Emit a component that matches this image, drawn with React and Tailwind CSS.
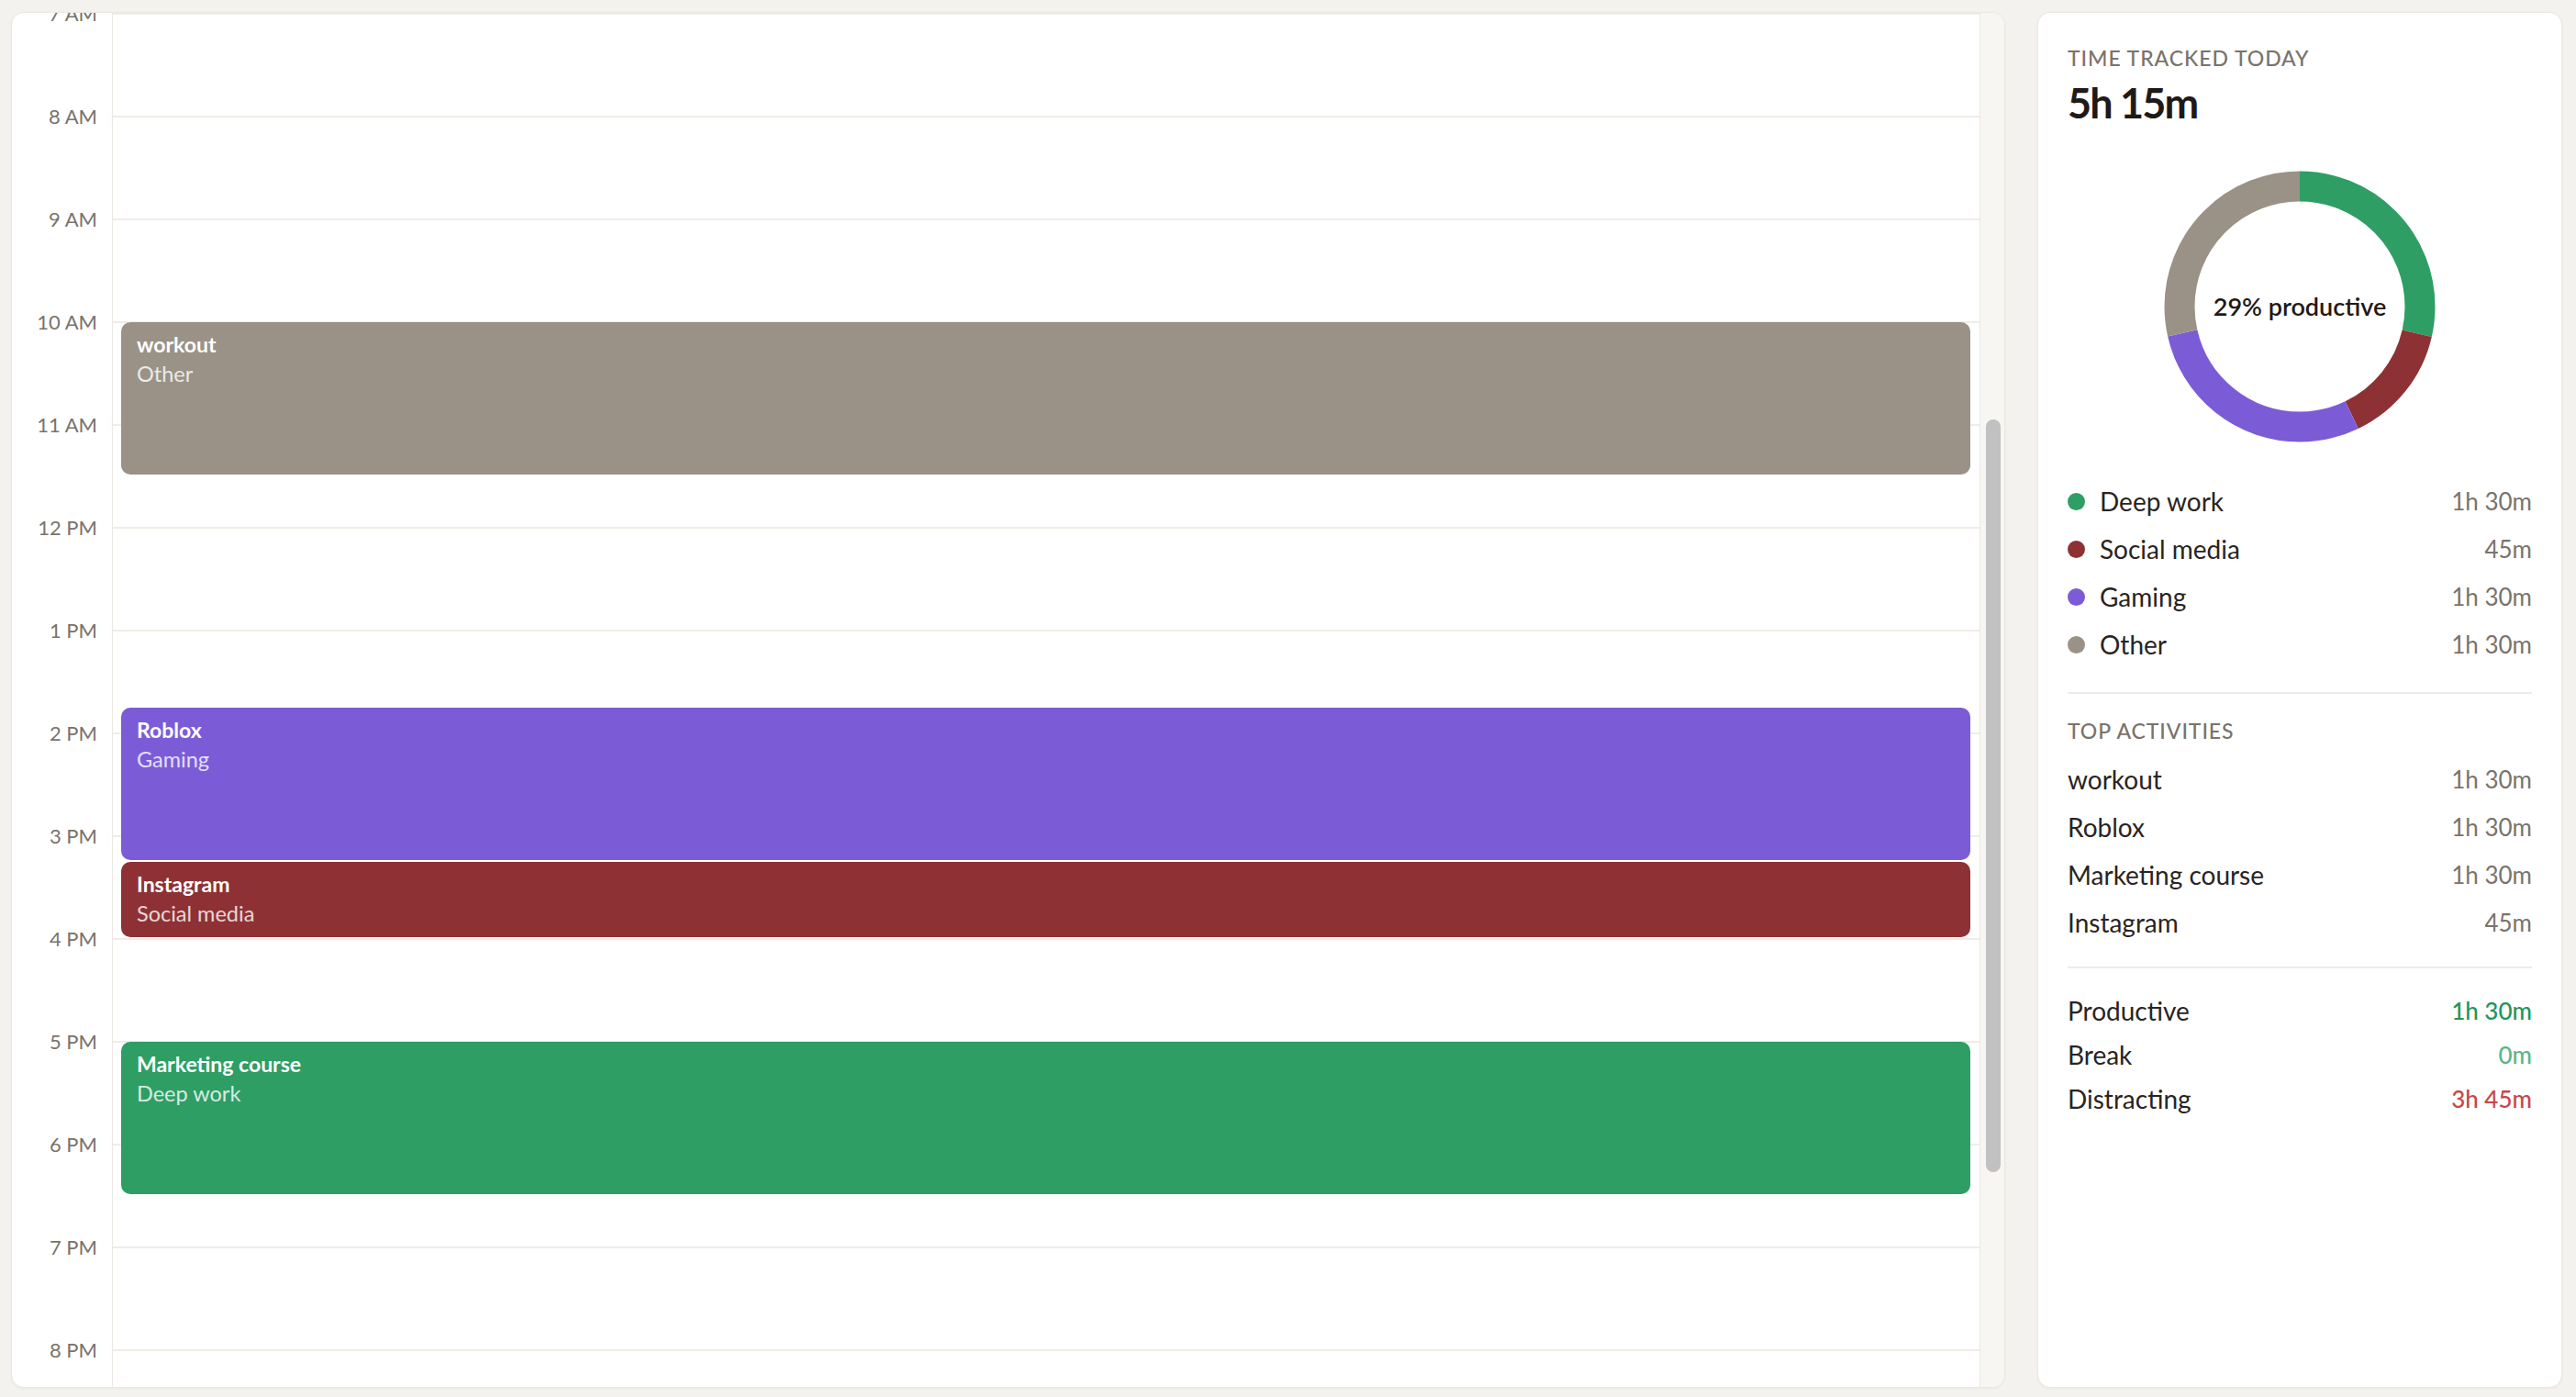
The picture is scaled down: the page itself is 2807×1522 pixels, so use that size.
import { clsx } from 'clsx'

const HOUR = 112
const START = 7

const HOURS = ['7 AM', '8 AM', '9 AM', '10 AM', '11 AM', '12 PM', '1 PM', '2 PM', '3 PM', '4 PM', '5 PM', '6 PM', '7 PM', '8 PM']

const EVENTS = [
  { title: 'workout', category: 'Other', start: 10, end: 11.5, bg: 'bg-[#9a9286]' },
  { title: 'Roblox', category: 'Gaming', start: 13.75, end: 15.25, bg: 'bg-[#7b5cd6]' },
  { title: 'Instagram', category: 'Social media', start: 15.25, end: 16, bg: 'bg-[#8e3135]' },
  { title: 'Marketing course', category: 'Deep work', start: 17, end: 18.5, bg: 'bg-[#2e9e65]' },
]

const CATEGORIES = [
  { name: 'Deep work', value: '1h 30m', minutes: 90, color: '#2e9e65', dot: 'bg-[#2e9e65]' },
  { name: 'Social media', value: '45m', minutes: 45, color: '#8e3135', dot: 'bg-[#8e3135]' },
  { name: 'Gaming', value: '1h 30m', minutes: 90, color: '#7b5cd6', dot: 'bg-[#7b5cd6]' },
  { name: 'Other', value: '1h 30m', minutes: 90, color: '#9a9286', dot: 'bg-[#9a9286]' },
]

const TOP = [
  { name: 'workout', value: '1h 30m' },
  { name: 'Roblox', value: '1h 30m' },
  { name: 'Marketing course', value: '1h 30m' },
  { name: 'Instagram', value: '45m' },
]

const FONT = { fontFamily: 'Lato, "Open Sans", sans-serif' }

export default function App() {
  return (
    <div
      className="h-screen w-full bg-[#f4f2ee] flex gap-[35px] pl-3 pr-[15px] pt-[13px] pb-[10px] text-[#2a2421]"
      style={FONT}
    >
      <Calendar />
      <Summary />
    </div>
  )
}

function Calendar() {
  return (
    <div className="flex-1 min-w-0 flex bg-white rounded-[14px] border border-[#ebe7e1] overflow-hidden shadow-[0_1px_3px_rgba(60,40,20,0.05)]">
      <div className="flex-1 min-w-0 overflow-hidden">
        <div className="flex">
          {/* hour labels */}
          <div className="w-[110px] shrink-0 border-r border-[#ece8e2] flex flex-col -mt-[56px]">
            {HOURS.map((h) => (
              <div key={h} className="h-[112px] shrink-0 flex items-center justify-end pr-[16px] text-[22px] text-[#7a736b]">
                {h}
              </div>
            ))}
            <div className="h-[224px] shrink-0" />
          </div>

          {/* grid */}
          <div className="flex-1 relative">
            {[...HOURS, '9 PM', '10 PM'].map((h) => (
              <div key={h} className="h-[112px] border-t-2 border-[#f0ece7]" />
            ))}
            {EVENTS.map((ev) => (
              <div
                key={ev.title}
                className={clsx('absolute left-[9px] right-[10px] rounded-[10px] px-[17px] pt-[8px] text-white', ev.bg)}
                style={{ top: (ev.start - START) * HOUR + 1, height: (ev.end - ev.start) * HOUR - 2 }}
              >
                <div className="text-[23px] font-bold leading-[32px]">{ev.title}</div>
                <div className="text-[23.5px] leading-[32px] text-white/80">{ev.category}</div>
              </div>
            ))}
          </div>
        </div>
      </div>

      {/* scrollbar */}
      <div className="w-[27px] shrink-0 border-l border-[#ece8e2] bg-[#f7f6f3] flex flex-col pl-[6px]">
        <div className="h-[443px] shrink-0" />
        <div className="h-[820px] w-[16px] rounded-full bg-[#c1c1c1]" />
      </div>
    </div>
  )
}

function Donut() {
  const r = 131
  const c = 2 * Math.PI * r
  const total = CATEGORIES.reduce((s, x) => s + x.minutes, 0)
  let offset = 0

  return (
    <div className="relative w-[296px] h-[296px] mx-auto">
      <svg width="296" height="296" viewBox="0 0 296 296" className="-rotate-90">
        {CATEGORIES.map((cat) => {
          const len = (cat.minutes / total) * c
          const el = (
            <circle
              key={cat.name}
              cx="148"
              cy="148"
              r={r}
              fill="none"
              stroke={cat.color}
              strokeWidth="33"
              strokeDasharray={`${len} ${c - len}`}
              strokeDashoffset={-offset}
            />
          )
          offset += len
          return el
        })}
      </svg>
      <div className="absolute inset-0 flex items-center justify-center text-[27px] font-semibold text-[#1f1a17]">
        29% productive
      </div>
    </div>
  )
}

function Row({ label, value, valueClass = 'text-[#7a736b]', dot, height = 'h-[52px]' }) {
  return (
    <div className={clsx('flex items-center justify-between', height)}>
      <div className="flex items-center gap-4">
        {dot && <span className={clsx('w-[19px] h-[19px] rounded-full', dot)} />}
        <span className="text-[28px]">{label}</span>
      </div>
      <span className={clsx('text-[26px]', valueClass)}>{value}</span>
    </div>
  )
}

function Summary() {
  return (
    <div className="w-[572px] shrink-0 bg-white rounded-[14px] border border-[#ebe7e1] px-8 pt-[34px] shadow-[0_1px_3px_rgba(60,40,20,0.05)]">
      <div className="text-[23px] leading-[30px] font-medium tracking-[0.04em] text-[#7a736b]">TIME TRACKED TODAY</div>
      <div className="text-[45px] leading-[50px] font-bold tracking-[-0.04em] text-[#1f1a17] mt-[9px]">5h 15m</div>

      <div className="mt-[49px]">
        <Donut />
      </div>

      <div className="mt-[38px]">
        {CATEGORIES.map((cat) => (
          <Row key={cat.name} label={cat.name} value={cat.value} dot={cat.dot} />
        ))}
      </div>

      <div className="h-[2px] bg-[#efebe6] mt-[26px]" />

      <div className="mt-[25px] text-[23px] leading-[30px] font-medium tracking-[0.04em] text-[#7a736b]">TOP ACTIVITIES</div>
      <div className="mt-[12px]">
        {TOP.map((t) => (
          <Row key={t.name} label={t.name} value={t.value} />
        ))}
      </div>

      <div className="h-[2px] bg-[#efebe6] mt-[22px]" />

      <div className="mt-[22px]">
        <Row label="Productive" value="1h 30m" valueClass="text-[#23965a] font-medium" height="h-[48px]" />
        <Row label="Break" value="0m" valueClass="text-[#5db58a] font-medium" height="h-[48px]" />
        <Row label="Distracting" value="3h 45m" valueClass="text-[#c9464a] font-medium" height="h-[48px]" />
      </div>
    </div>
  )
}
